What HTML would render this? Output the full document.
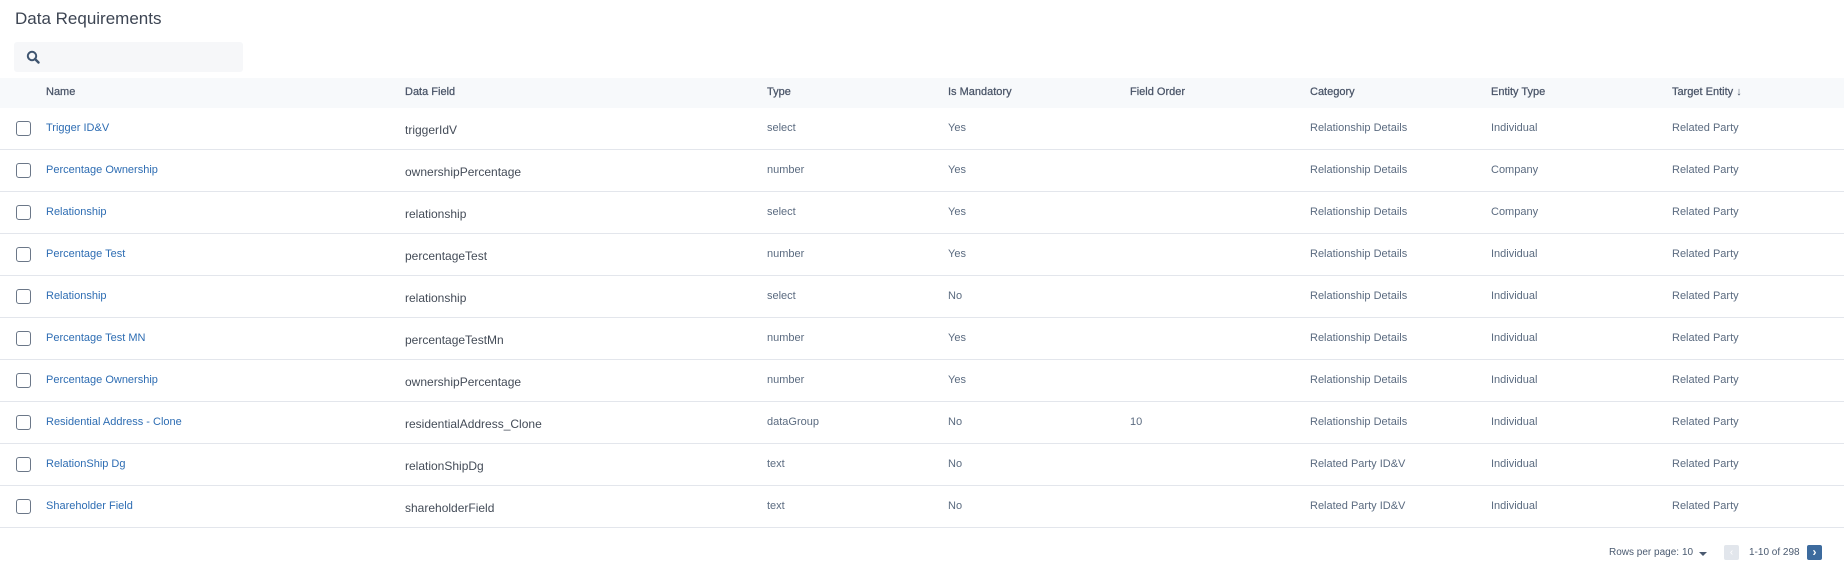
<!DOCTYPE html>
<html><head><meta charset="utf-8"><style>
*{box-sizing:border-box;margin:0;padding:0}
body{width:1844px;height:568px;background:#fff;font-family:"Liberation Sans",sans-serif;position:relative;overflow:hidden;color:#5b6b80}
.title{position:absolute;left:15px;top:9px;font-size:17px;color:#3d4553}
.search{position:absolute;left:14px;top:42px;width:229px;height:30px;background:#f6f7f9;border-radius:3px}
.hdr{position:absolute;left:0;top:78px;width:1844px;height:30px;background:#f7f9fb}
.c{position:absolute;white-space:nowrap;font-size:11px}
.h{font-size:11px;color:#4a5568;top:86px;-webkit-text-stroke:0.25px #4a5568}
.row{position:absolute;left:0;width:1844px;height:42px;border-bottom:1px solid #e3e6ec}
.cb{position:absolute;left:16px;top:13px;width:15px;height:15px;border:1.5px solid #6b7788;border-radius:3px}
.row .c{top:14px}
.n{color:#2e6db3}
.df{font-size:12px!important;color:#444c58;top:15px!important}
.p{position:absolute;top:547px;font-size:10px;color:#4a5a70;white-space:nowrap}
</style></head><body>
<div class="title">Data Requirements</div>
<div class="search"><svg style="position:absolute;left:12px;top:8px" width="14" height="14" viewBox="0 0 14 14"><circle cx="6" cy="6" r="4.2" fill="none" stroke="#3f5570" stroke-width="2"/><path d="M9 9 L12.5 12.5" stroke="#3f5570" stroke-width="2.4" stroke-linecap="round"/></svg></div>
<div class="hdr"></div>
<div class="c h" style="left:46px">Name</div>
<div class="c h" style="left:405px">Data Field</div>
<div class="c h" style="left:767px">Type</div>
<div class="c h" style="left:948px">Is Mandatory</div>
<div class="c h" style="left:1130px">Field Order</div>
<div class="c h" style="left:1310px">Category</div>
<div class="c h" style="left:1491px">Entity Type</div>
<div class="c h" style="left:1672px">Target Entity <span style="-webkit-text-stroke:0">&#8595;</span></div>

<div class="row" style="top:108px"><div class="cb"></div><div class="c n" style="left:46px">Trigger ID&amp;V</div><div class="c df" style="left:405px">triggerIdV</div><div class="c" style="left:767px">select</div><div class="c" style="left:948px">Yes</div><div class="c" style="left:1310px">Relationship Details</div><div class="c" style="left:1491px">Individual</div><div class="c" style="left:1672px">Related Party</div></div>
<div class="row" style="top:150px"><div class="cb"></div><div class="c n" style="left:46px">Percentage Ownership</div><div class="c df" style="left:405px">ownershipPercentage</div><div class="c" style="left:767px">number</div><div class="c" style="left:948px">Yes</div><div class="c" style="left:1310px">Relationship Details</div><div class="c" style="left:1491px">Company</div><div class="c" style="left:1672px">Related Party</div></div>
<div class="row" style="top:192px"><div class="cb"></div><div class="c n" style="left:46px">Relationship</div><div class="c df" style="left:405px">relationship</div><div class="c" style="left:767px">select</div><div class="c" style="left:948px">Yes</div><div class="c" style="left:1310px">Relationship Details</div><div class="c" style="left:1491px">Company</div><div class="c" style="left:1672px">Related Party</div></div>
<div class="row" style="top:234px"><div class="cb"></div><div class="c n" style="left:46px">Percentage Test</div><div class="c df" style="left:405px">percentageTest</div><div class="c" style="left:767px">number</div><div class="c" style="left:948px">Yes</div><div class="c" style="left:1310px">Relationship Details</div><div class="c" style="left:1491px">Individual</div><div class="c" style="left:1672px">Related Party</div></div>
<div class="row" style="top:276px"><div class="cb"></div><div class="c n" style="left:46px">Relationship</div><div class="c df" style="left:405px">relationship</div><div class="c" style="left:767px">select</div><div class="c" style="left:948px">No</div><div class="c" style="left:1310px">Relationship Details</div><div class="c" style="left:1491px">Individual</div><div class="c" style="left:1672px">Related Party</div></div>
<div class="row" style="top:318px"><div class="cb"></div><div class="c n" style="left:46px">Percentage Test MN</div><div class="c df" style="left:405px">percentageTestMn</div><div class="c" style="left:767px">number</div><div class="c" style="left:948px">Yes</div><div class="c" style="left:1310px">Relationship Details</div><div class="c" style="left:1491px">Individual</div><div class="c" style="left:1672px">Related Party</div></div>
<div class="row" style="top:360px"><div class="cb"></div><div class="c n" style="left:46px">Percentage Ownership</div><div class="c df" style="left:405px">ownershipPercentage</div><div class="c" style="left:767px">number</div><div class="c" style="left:948px">Yes</div><div class="c" style="left:1310px">Relationship Details</div><div class="c" style="left:1491px">Individual</div><div class="c" style="left:1672px">Related Party</div></div>
<div class="row" style="top:402px"><div class="cb"></div><div class="c n" style="left:46px">Residential Address - Clone</div><div class="c df" style="left:405px">residentialAddress_Clone</div><div class="c" style="left:767px">dataGroup</div><div class="c" style="left:948px">No</div><div class="c" style="left:1130px">10</div><div class="c" style="left:1310px">Relationship Details</div><div class="c" style="left:1491px">Individual</div><div class="c" style="left:1672px">Related Party</div></div>
<div class="row" style="top:444px"><div class="cb"></div><div class="c n" style="left:46px">RelationShip Dg</div><div class="c df" style="left:405px">relationShipDg</div><div class="c" style="left:767px">text</div><div class="c" style="left:948px">No</div><div class="c" style="left:1310px">Related Party ID&amp;V</div><div class="c" style="left:1491px">Individual</div><div class="c" style="left:1672px">Related Party</div></div>
<div class="row" style="top:486px"><div class="cb"></div><div class="c n" style="left:46px">Shareholder Field</div><div class="c df" style="left:405px">shareholderField</div><div class="c" style="left:767px">text</div><div class="c" style="left:948px">No</div><div class="c" style="left:1310px">Related Party ID&amp;V</div><div class="c" style="left:1491px">Individual</div><div class="c" style="left:1672px">Related Party</div></div>

<div class="p" style="left:1609px">Rows per page:</div>
<div class="p" style="left:1682px">10</div>
<div style="position:absolute;left:1699px;top:552px;width:0;height:0;border-left:4.5px solid transparent;border-right:4.5px solid transparent;border-top:4.5px solid #4a5a70"></div>
<div style="position:absolute;left:1724px;top:545px;width:15px;height:15px;background:#e2e6ec;border-radius:2px;color:#fff;font-size:10px;text-align:center;line-height:15px">&#8249;</div>
<div class="p" style="left:1749px">1-10 of 298</div>
<div style="position:absolute;left:1807px;top:545px;width:15px;height:15px;background:#3d6b9e;border-radius:2px;color:#fff;font-size:12px;font-weight:bold;text-align:center;line-height:14px">&#8250;</div>
</body></html>
